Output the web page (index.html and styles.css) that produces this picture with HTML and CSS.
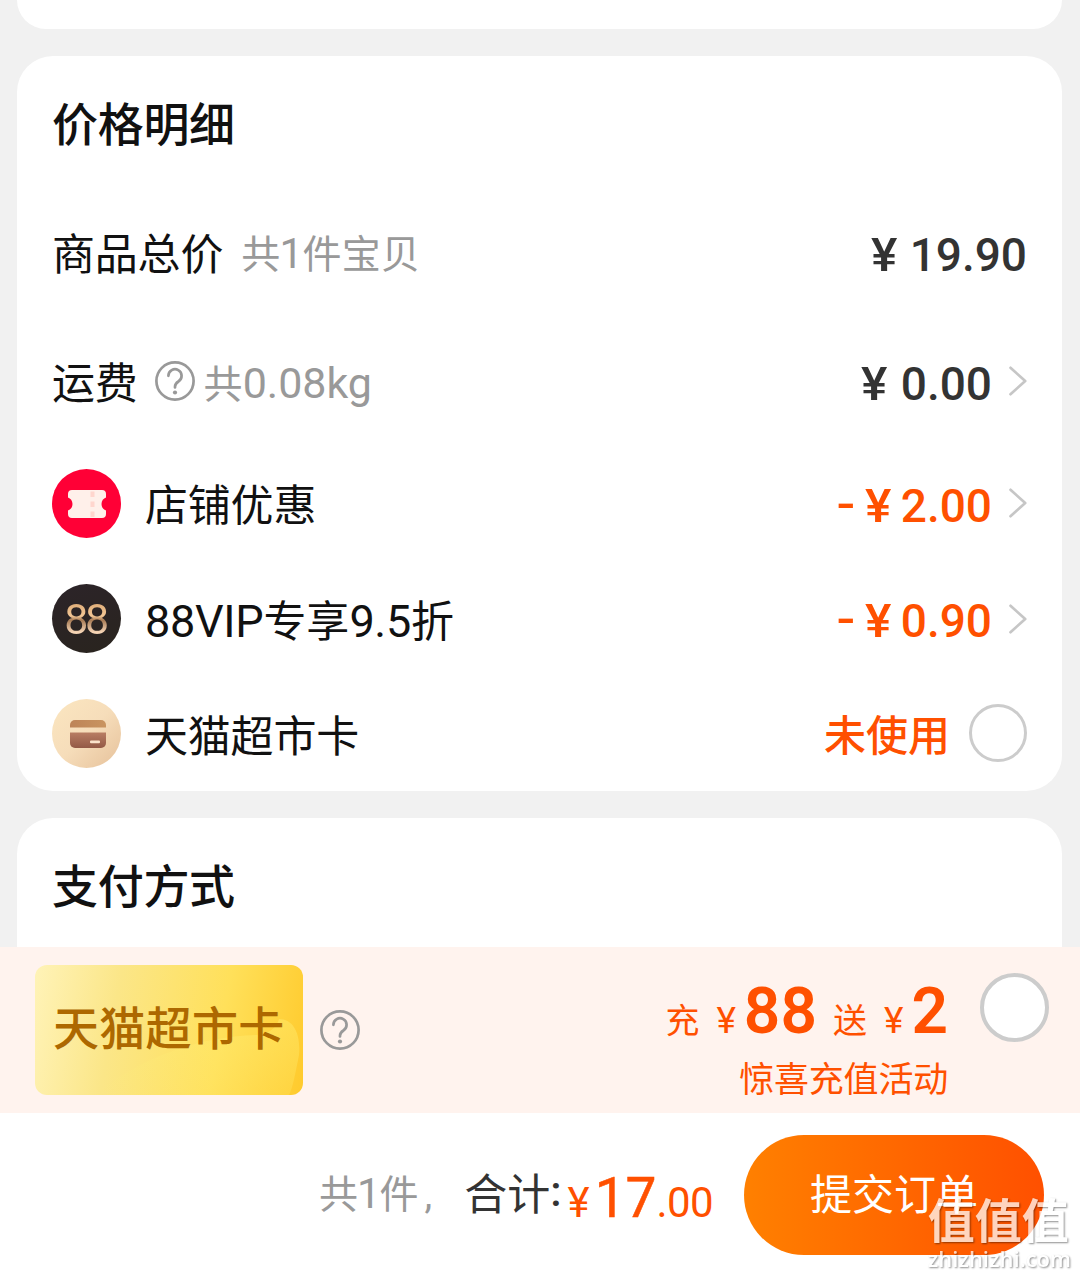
FILE: index.html
```html
<!DOCTYPE html>
<html lang="zh-CN">
<head>
<meta charset="utf-8">
<title>确认订单</title>
<link rel="stylesheet" href="styles.css">
</head>
<body>
<main class="page">
  <section class="card card-previous"></section>

  <section class="card card-detail">
    <h2 class="title">价格明细</h2>
    <div class="row row-total">
      <span class="label">商品总价</span>
      <span class="hint hint-count">共<span class="digit">1</span>件宝贝</span>
      <span class="price"><span class="yen">¥</span>19.90</span>
    </div>
    <div class="row row-freight">
      <span class="label">运费</span>
      <svg class="help" viewBox="0 0 40 40"><circle cx="20" cy="20" r="18.6"/><path d="M13.4 14.8a6.6 6.6 0 1 1 10 5.700c-2.400 1.500-3.400 2.600-3.400 5.300v.6"/><circle class="dot" cx="20" cy="31.500" r="2.100"/></svg>
      <span class="hint hint-weight">共<span class="digits">0.08kg</span></span>
      <span class="price"><span class="yen">¥</span>0.00</span>
      <svg class="chevron" viewBox="0 0 18 30"><path d="M1.500 1.800 16.200 15 1.500 28.200"/></svg>
    </div>
    <div class="row row-shop">
      <svg class="badge" viewBox="0 0 69 69">
        <circle cx="34.500" cy="34.500" r="34.500" fill="#ff0036"/>
        <path fill="#fff0ea" d="M20 21h30a4 4 0 0 1 4 4v3.500c-2.500 1-4.500 3-4.500 6.500s2 5.500 4.500 6.500V45a4 4 0 0 1-4 4H20a4 4 0 0 1-4-4v-3.500c2.500-1 4.500-3 4.500-6.500s-2-5.500-4.500-6.500V25a4 4 0 0 1 4-4z"/>
        <path stroke="#ffd6ce" stroke-width="4" stroke-dasharray="5.500 4.500" d="M40.500 22.500v26"/>
      </svg>
      <span class="label">店铺优惠</span>
      <span class="price off"><span class="minus">-</span><span class="yen">¥</span>2.00</span>
      <svg class="chevron" viewBox="0 0 18 30"><path d="M1.500 1.800 16.200 15 1.500 28.200"/></svg>
    </div>
    <div class="row row-vip">
      <span class="badge badge-vip"><span class="vip-text">88</span></span>
      <span class="label label-vip"><span class="latin">88VIP</span>专享<span class="latin">9.5</span>折</span>
      <span class="price off"><span class="minus">-</span><span class="yen">¥</span>0.90</span>
      <svg class="chevron" viewBox="0 0 18 30"><path d="M1.500 1.800 16.200 15 1.500 28.200"/></svg>
    </div>
    <div class="row row-card">
      <svg class="badge" viewBox="0 0 69 69">
        <defs>
          <linearGradient id="cream" x1="0" y1="0" x2="1" y2="1"><stop offset="0" stop-color="#fbe6c0"/><stop offset=".5" stop-color="#f6ddba"/><stop offset="1" stop-color="#e6c19a"/></linearGradient>
          <linearGradient id="top" x1="0" x2="1"><stop offset="0" stop-color="#bd8458"/><stop offset="1" stop-color="#c99460"/></linearGradient>
          <linearGradient id="base" x1="0" y1="0" x2="0" y2="1"><stop offset="0" stop-color="#b87d63"/><stop offset="1" stop-color="#935946"/></linearGradient>
        </defs>
        <circle cx="34.500" cy="34.500" r="34.500" fill="url(#cream)"/>
        <path fill="url(#top)" d="M18 28.500v-2.500a5 5 0 0 1 5-5h26a5 5 0 0 1 5 5v2.500z"/>
        <path fill="url(#base)" d="M18 33.500h36v10.500a5 5 0 0 1-5 5H23a5 5 0 0 1-5-5z"/>
        <rect x="38" y="41.500" width="10" height="2.800" rx="1" fill="#fbe3cb"/>
      </svg>
      <span class="label">天猫超市卡</span>
      <span class="unused">未使用</span>
      <span class="radio"></span>
    </div>
  </section>

  <section class="card card-payment">
    <h2 class="title">支付方式</h2>
  </section>

  <section class="promo">
    <div class="gift">
      <svg class="gift-shine" viewBox="0 0 268 130" preserveAspectRatio="none"><defs><linearGradient id="shine" x1="0" y1="1" x2="1" y2="0"><stop offset="0" stop-color="#fff17a" stop-opacity="0"/><stop offset=".7" stop-color="#fff17a" stop-opacity=".3"/><stop offset="1" stop-color="#fff17a" stop-opacity=".4"/></linearGradient></defs><path fill="url(#shine)" d="M60 130C110 90 165 72 222 70q18-2 22-16c14 0 22 14 20 36-4 20-6 32-10 40z"/></svg>
      <span class="gift-text">天猫超市卡</span>
    </div>
    <svg class="help" viewBox="0 0 40 40"><circle cx="20" cy="20" r="18.600"/><path d="M13.400 14.800a6.600 6.600 0 1 1 10 5.700c-2.400 1.500-3.400 2.600-3.400 5.300v.6"/><circle class="dot" cx="20" cy="31.500" r="2.100"/></svg>
    <div class="offer">
      <div class="offer-main"><span>充</span><span class="offer-yen">¥</span><b>88</b><span class="send">送</span><span class="offer-yen">¥</span><b>2</b></div>
      <div class="offer-sub">惊喜充值活动</div>
    </div>
    <span class="radio radio-large"></span>
  </section>

  <footer class="checkout">
    <span class="count">共<span class="digit">1</span>件<span class="comma">,</span></span>
    <span class="sum-label">合计<span class="colon">:</span></span>
    <span class="sum"><span class="sum-yen">¥</span><span class="sum-int">17</span><span class="sum-dec">.00</span></span>
    <button class="submit">提交订单</button>
  </footer>

  <div class="watermark">
    <div class="mark-name">值值值</div>
    <div class="mark-url">zhizhizhi.com</div>
  </div>
</main>
</body>
</html>
```

FILE: styles.css
```css
* { box-sizing: border-box; }

body {
  margin: 0;
  background: #f1f1f1;
  color: #111;
  font-family: Roboto, "Noto Sans CJK SC", sans-serif;
}

.page {
  position: relative;
  display: flex;
  flex-direction: column;
  width: 1080px;
  height: 1276px;
  overflow: hidden;
}

.card {
  flex: none;
  margin: 0 18px 0 17px;
  padding: 0 35px;
  border-radius: 36px;
  background: #fff;
}

.card-previous { height: 29px; margin-bottom: 27px; border-radius: 0 0 36px 36px; }
.card-detail { height: 735px; margin-bottom: 27px; }
.card-payment { height: 129px; border-radius: 36px 36px 0 0; }

.title {
  height: 131px;
  margin: 0;
  font-size: 46px;
  font-weight: 500;
  line-height: 138px;
  letter-spacing: -0.3px;
  white-space: nowrap;
}

.row {
  display: flex;
  align-items: center;
  height: 115px;
  line-height: 60px;
  white-space: nowrap;
}
.row-total { height: 130px; }
.row-freight { height: 128px; }
.row-shop { height: 116px; }

.label { font-size: 43px; letter-spacing: -0.2px; padding-top: 6px; }
.label-vip { letter-spacing: 0; }
.latin { font-size: 45px; letter-spacing: -0.3px; }
.hint { color: #999; font-size: 39px; }
.hint-count { margin-left: 18px; padding-top: 4px; letter-spacing: 0.3px; }
.hint-weight { margin-left: 9px; padding-top: 6px; }
.digit { margin: 0 -1px; font-size: 42px; }
.digits { font-size: 43px; }

.help { flex: none; width: 40px; height: 40px; fill: none; stroke: #999; stroke-width: 2.7; stroke-linecap: round; }
.help .dot { fill: #999; stroke: none; }
.row-freight .help { margin-left: 17px; }

.price {
  margin-left: auto;
  padding-top: 6px;
  color: #333;
  font-size: 46px;
  font-weight: 500;
}
.row-vip .price { padding-top: 5px; }
.yen { display: inline-block; margin-right: 13px; transform: scaleX(1.08); }
.row-freight .yen { margin-right: 14px; }
.off, .unused { color: #ff5000; }
.off .yen { margin-right: 10px; }
.minus { display: inline-block; margin-right: 13px; transform: translateY(-2px) scaleX(1.2); }
.chevron { width: 18px; height: 30px; margin-left: 17px; fill: none; stroke: #c6c6c6; stroke-width: 2.7; stroke-linecap: round; stroke-linejoin: round; }

.badge { flex: none; width: 69px; height: 69px; margin-right: 24px; }
.badge-vip {
  display: flex;
  align-items: center;
  justify-content: center;
  border-radius: 50%;
  background: linear-gradient(160deg, #2c2429, #29241e);
}
.vip-text {
  padding-right: 3px;
  background: linear-gradient(#dba873 20%, #f3c795 45%, #a77b55 52%, #f6d5b5 72%);
  background-clip: text;
  color: transparent;
  font-size: 43px;
  letter-spacing: -3.5px;
}

.unused { margin-left: auto; padding-top: 6px; font-size: 42px; font-weight: 500; }
.radio { width: 58px; height: 58px; margin-left: 19px; border: 3px solid #ccc; border-radius: 50%; background: #fff; }
.row-card .radio { margin-bottom: 2px; }

.promo {
  display: flex;
  flex: none;
  align-items: center;
  height: 166px;
  padding: 0 31px 0 35px;
  background: #fff3ee;
}
.gift {
  position: relative;
  display: flex;
  align-items: center;
  width: 268px;
  height: 130px;
  margin-right: 17px;
  padding: 0 0 3px 18px;
  border-radius: 12px;
  overflow: hidden;
  background: linear-gradient(100deg, #fff3b8 0%, #fbe688 30%, #ffe05a 68%, #ffca2c 100%);
}
.gift-shine { position: absolute; inset: 0; width: 100%; height: 100%; }
.gift-text { position: relative; color: #ad6800; font-size: 46px; font-weight: 500; line-height: 60px; letter-spacing: 0.3px; white-space: nowrap; }
.offer { margin-left: auto; padding-top: 23px; color: #ff5000; text-align: right; white-space: nowrap; }
.offer-main { height: 68px; font-size: 34px; line-height: 68px; }
.offer-main b { font-size: 64px; font-weight: 600; }
.offer-yen { margin: 0 8px 0 17px; font-size: 37px; }
.send { margin-left: 16px; }
.offer-sub { height: 60px; font-size: 35px; line-height: 70px; letter-spacing: -0.2px; }
.radio-large { align-self: flex-start; width: 69px; height: 69px; margin: 26px 0 0 32px; border-width: 4px; }

.checkout {
  display: flex;
  flex: none;
  align-items: center;
  justify-content: flex-end;
  height: 163px;
  padding-right: 36px;
  background: #fff;
  line-height: 70px;
  white-space: nowrap;
}
.count { color: #999; font-size: 39px; }
.comma { margin-left: 6px; }
.sum-label { margin-left: 32px; color: #333; font-size: 43px; }
.colon { display: inline-block; font-weight: 500; transform: translateY(-4px); }
.sum { margin-left: 6px; padding-top: 21px; color: #ff5000; }
.sum-yen { margin-right: 5px; font-size: 42px; }
.sum-int { font-size: 55px; -webkit-text-stroke: 0.5px #ff5000; }
.sum-dec { font-size: 42px; letter-spacing: -0.6px; }
.submit {
  width: 300px;
  height: 120px;
  margin-left: 31px;
  padding: 3px 0 0;
  border: 0;
  border-radius: 60px;
  background: linear-gradient(90deg, #ff8000, #ff5000);
  color: #fff;
  font: 400 42px/60px Roboto, "Noto Sans CJK SC", sans-serif;
}

.watermark {
  position: absolute;
  right: 9px;
  bottom: 4px;
  color: #fff;
  opacity: .74;
  text-shadow: 1px 1px 2px rgba(0, 0, 0, .6);
  white-space: nowrap;
}
.mark-name { height: 47px; font-size: 47px; font-weight: 700; line-height: 50px; }
.mark-url { height: 28px; font: 600 22px/28px "Open Sans", sans-serif; }
```
